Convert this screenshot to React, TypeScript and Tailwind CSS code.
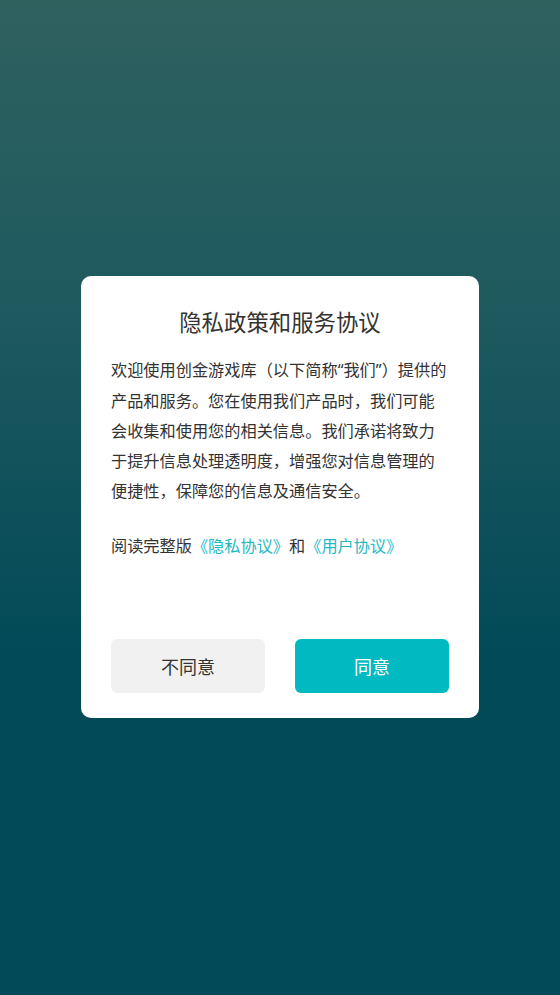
export default function App() {
  const q = (s: string) => (
    <span style={{ fontFamily: '"Noto Sans", sans-serif' }}>{s}</span>
  );
  return (
    <div
      className="flex h-[995px] w-full items-start justify-center bg-[linear-gradient(180deg,#2f615f_0%,#1f5a5f_30%,#024a58_66%,#024a58_100%)]"
      style={{ fontFamily: '"Noto Sans CJK SC", "Noto Sans", sans-serif' }}
    >
      <div className="mt-[276px] w-[398px] rounded-[10px] bg-white px-[30px] pt-[30px] pb-[25px]">
        <h1 className="text-center text-[22.4px] leading-[30px] text-[#333333]">
          隐私政策和服务协议
        </h1>
        <p className="mt-[18px] whitespace-nowrap text-[16.2px] leading-[30px] text-[#333333]">
          欢迎使用创金游戏库（以下简称{q("“")}我们{q("”")}）提供的
          <br />
          产品和服务。您在使用我们产品时，我们可能
          <br />
          会收集和使用您的相关信息。我们承诺将致力
          <br />
          于提升信息处理透明度，增强您对信息管理的
          <br />
          便捷性，保障您的信息及通信安全。
        </p>
        <p className="mt-[25px] text-[16.2px] leading-[30px] text-[#333333]">
          阅读完整版<span className="text-[#1fb9c4]">《隐私协议》</span>和
          <span className="text-[#1fb9c4]">《用户协议》</span>
        </p>
        <div className="mt-[79px] flex gap-[30px]">
          <button className="h-[54px] flex-1 rounded-[6px] bg-[#f1f1f1] text-[18px] text-[#333333]">
            不同意
          </button>
          <button className="h-[54px] flex-1 rounded-[6px] bg-[#00b9c1] text-[18px] text-white">
            同意
          </button>
        </div>
      </div>
    </div>
  );
}
